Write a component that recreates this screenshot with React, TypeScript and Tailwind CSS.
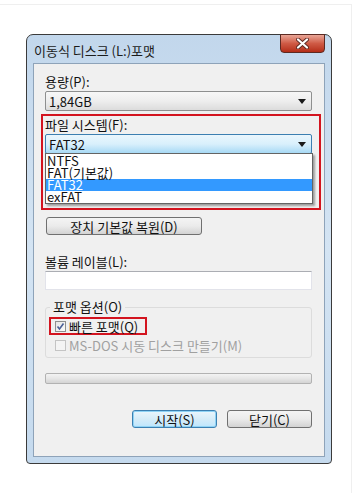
import React from 'react';

const font = { fontFamily: '"Noto Sans CJK KR", "Noto Sans", sans-serif' };

function Arrow() {
  return (
    <svg width="8" height="5" viewBox="0 0 8 5" className="mr-[5px]">
      <path d="M0 0h8L4 5z" fill="#1a1a1a" />
    </svg>
  );
}

function Combo({ value, active }: { value: string; active?: boolean }) {
  return (
    <div
      className={
        'flex h-[20px] items-center justify-between rounded-[2px] border pl-[3px] text-[13px] text-[#111] ' +
        (active
          ? 'border-[#3c7fb1] bg-gradient-to-b from-[#eaf6fd] via-[#d9f0fc] to-[#a7d9f5]'
          : 'border-[#8e8f8f] bg-gradient-to-b from-[#f7f7f7] via-[#eeeeee] to-[#dcdcdc]')
      }
    >
      <span className="leading-none">{value}</span>
      <Arrow />
    </div>
  );
}

function Button({ label, primary, className }: { label: string; primary?: boolean; className?: string }) {
  return (
    <div
      className={
        'flex h-[18px] items-center justify-center rounded-[3px] border text-[13px] leading-none text-[#111] ' +
        (primary
          ? 'border-[#3c7fb1] bg-gradient-to-b from-[#eaf6fd] via-[#d6ecf8] to-[#bee6fd] shadow-[inset_0_0_0_1px_#8fd3f5] '
          : 'border-[#707070] bg-gradient-to-b from-[#f4f4f4] via-[#ebebeb] to-[#d3d3d3] ') +
        (className ?? '')
      }
    >
      {label}
    </div>
  );
}

export default function App() {
  return (
    <div className="h-[494px] w-[357px] bg-white pt-[4px] pr-[5px]" style={font}>
      <div className="h-[489px] border-t border-r border-[#efefef] pl-[26px] pt-[29px]">
        {/* window */}
        <div className="relative h-[430px] w-[306px] rounded-t-[7px] rounded-b-[4px] border border-[#3b3b3b] bg-gradient-to-b from-[#c2d7ec] via-[#d4e4f3] to-[#c5daee] px-[6px] pb-[6px]">
          <div className="flex h-[28px] items-center pl-[1px] pt-[3px] text-[13px] text-[#1b1b1b]">
            이동식 디스크 (L:)포맷
          </div>
          <div className="absolute right-[6px] top-[-1px] flex h-[19px] w-[45px] items-center justify-center rounded-b-[4px] border border-[#5d2a22] bg-gradient-to-b from-[#e8a597] via-[#cf5a45] to-[#b42c16]">
            <svg width="13" height="11" viewBox="0 0 13 11">
              <path d="M2 1.5l9 8M11 1.5l-9 8" stroke="#5b2a24" strokeWidth="4" strokeLinecap="round" />
              <path d="M2 1.5l9 8M11 1.5l-9 8" stroke="#ffffff" strokeWidth="2.2" strokeLinecap="round" />
            </svg>
          </div>

          {/* client area */}
          <div className="h-[394px] border border-[#8ea3b9] bg-[#f0f0f0] pl-[11px] pr-[12px] text-[13px] text-[#111]">
            <div className="mt-[9px] h-[17px] leading-[17px]">용량(P):</div>
            <div className="mt-[1px]">
              <Combo value="1,84GB" />
            </div>

            {/* highlight */}
            <div className="mt-[3px] ml-[-4px] w-[280px] border-2 border-[#d3141f] pl-[2px] pr-[7px] pb-[4px]">
              <div className="h-[17px] pt-[1px] leading-[16px]">파일 시스템(F):</div>
              <div className="mt-[1px]">
                <Combo value="FAT32" active />
              </div>
              <div className="mt-[-1px] mr-[-1px] border border-[#646464] bg-white text-[13px] leading-[12px] shadow-[2px_2px_2px_rgba(0,0,0,0.35)]">
                <div className="pl-[1px] pt-[1px]">NTFS</div>
                <div className="pl-[1px]">FAT(기본값)</div>
                <div className="bg-[#3399ff] pl-[1px] text-white">FAT32</div>
                <div className="pl-[1px]">exFAT</div>
              </div>
            </div>

            <Button label="장치 기본값 복원(D)" className="mt-[7px] ml-[1px] w-[156px]" />

            <div className="mt-[18px] h-[17px] leading-[17px]">볼륨 레이블(L):</div>
            <div className="mt-[1px] h-[19px] border border-[#e2e3ea] border-t-[#abadb3] bg-white" />

            {/* group box */}
            <div className="relative mt-[17px] h-[51px] rounded-[3px] border border-[#dcdcdc]">
              <div className="absolute left-[4px] top-[-9px] bg-[#f0f0f0] px-[3px] leading-[16px]">포맷 옵션(O)</div>
              <div className="ml-[3px] mt-[9px] flex h-[18px] w-[98px] items-center border-2 border-[#d3141f] pl-[4px]">
                <div className="flex h-[11px] w-[11px] items-center justify-center border border-[#8f8f8f] bg-gradient-to-br from-[#e5e5e5] to-[#fbfbfb]">
                  <svg width="9" height="9" viewBox="0 0 9 9">
                    <path d="M1.5 4.5l2 2.5 4-5.5" stroke="#4a5f97" strokeWidth="1.6" fill="none" />
                  </svg>
                </div>
                <span className="ml-[3px] leading-none">빠른 포맷(Q)</span>
              </div>
              <div className="ml-[9px] mt-[1px] flex h-[18px] items-center text-[#a0a0a0]">
                <div className="h-[11px] w-[11px] border border-[#c4c4c4] bg-[#f4f4f4]" />
                <span className="ml-[3px] leading-none">MS-DOS 시동 디스크 만들기(M)</span>
              </div>
            </div>

            <div className="mt-[15px] h-[11px] rounded-[2px] border border-[#b2b2b2] bg-gradient-to-b from-[#f3f3f3] via-[#e6e6e6] to-[#d4d4d4]" />

            <div className="mt-[26px] flex justify-end gap-[10px]">
              <Button label="시작(S)" primary className="w-[85px]" />
              <Button label="닫기(C)" className="w-[85px]" />
            </div>
          </div>
        </div>
      </div>
    </div>
  );
}
